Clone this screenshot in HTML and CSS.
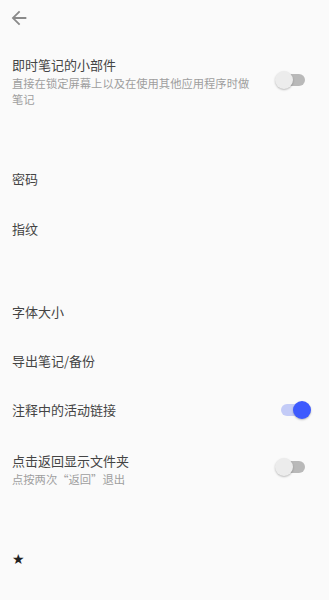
FILE: index.html
```html
<!DOCTYPE html>
<html lang="zh">
<head>
<meta charset="utf-8">
<link rel="stylesheet" href="styles.css">
</head>
<body>
<div class="page">
  <div class="toolbar">
    <svg class="back" viewBox="0 0 24 24" width="22" height="22"><path d="M20 11H7.83l5.59-5.59L12 4l-8 8 8 8 1.41-1.41L7.83 13H20v-2z" fill="#8a8a8a"/></svg>
  </div>

  <div class="row two first">
    <div class="texts">
      <div class="title">即时笔记的小部件</div>
      <div class="sub wide">直接在锁定屏幕上以及在使用其他应用程序时做笔记</div>
    </div>
    <div class="switch off w1"><span class="track"></span><span class="thumb"></span></div>
  </div>

  <div class="group g2">
    <div class="row one h50"><div class="title">密码</div></div>
    <div class="row one h50"><div class="title">指纹</div></div>
  </div>

  <div class="group g3">
    <div class="row one h49"><div class="title">字体大小</div></div>
    <div class="row one h49"><div class="title">导出笔记/备份</div></div>
    <div class="row one h49">
      <div class="title">注释中的活动链接</div>
      <div class="switch on"><span class="track"></span><span class="thumb"></span></div>
    </div>
  </div>

  <div class="row two last">
    <div class="texts">
      <div class="title">点击返回显示文件夹</div>
      <div class="sub">点按两次“返回”退出</div>
    </div>
    <div class="switch off w2"><span class="track"></span><span class="thumb"></span></div>
  </div>

  <div class="star">★</div>
</div>
</body>
</html>
```

FILE: styles.css
```css
html, body {
  margin: 0;
  padding: 0;
  background: #fafafa;
}
body {
  font-family: "Noto Sans CJK SC", "Noto Sans", sans-serif;
  width: 329px;
  height: 600px;
  overflow: hidden;
}
.page {
  display: flex;
  flex-direction: column;
}
.toolbar {
  height: 34px;
  display: flex;
  align-items: center;
  padding-left: 8px;
}
.back {
  display: block;
  margin-top: 1px;
}
.row {
  display: flex;
  padding: 0 12px;
}
.row.one {
  align-items: center;
  justify-content: space-between;
}
.h50 { height: 50px; }
.h49 { height: 49px; }
.title {
  font-size: 13px;
  line-height: 16px;
  color: #444444;
}
.sub {
  font-size: 11.3px;
  line-height: 16px;
  color: #9e9e9e;
  margin-top: 2px;
}
.sub.wide { width: 240px; }
.texts { flex: 1; }
.row.first { padding-top: 23px; }
.g2 { margin-top: 47px; }
.g3 { margin-top: 33px; }
.row.last { padding-top: 19px; }

.switch {
  position: relative;
  width: 30px;
  height: 20px;
  margin-right: 12px;
  flex: none;
}
.row.one .switch { margin-right: 6px; }
.switch .track {
  position: absolute;
  left: 4px;
  right: 0;
  top: 4px;
  height: 12px;
  border-radius: 6px;
  background: #b9b9b9;
}
.switch .thumb {
  position: absolute;
  top: 1px;
  width: 18px;
  height: 18px;
  border-radius: 50%;
}
.switch.off .thumb {
  left: 0;
  background: #ececec;
  box-shadow: 0 1px 2px rgba(0,0,0,0.25);
}
.switch.on .track { background: #c3cbf7; left: 0; right: 4px; }
.switch.on .thumb {
  right: 0;
  background: #3d5afe;
  box-shadow: 0 1px 2px rgba(0,0,0,0.25);
}
.w1 { margin-top: 13px; }
.w2 { margin-top: 4px; }

.star {
  margin-top: 64px;
  padding-left: 12px;
  font-size: 14px;
  line-height: 16px;
  color: #222;
  font-family: "DejaVu Sans", sans-serif;
}
```
